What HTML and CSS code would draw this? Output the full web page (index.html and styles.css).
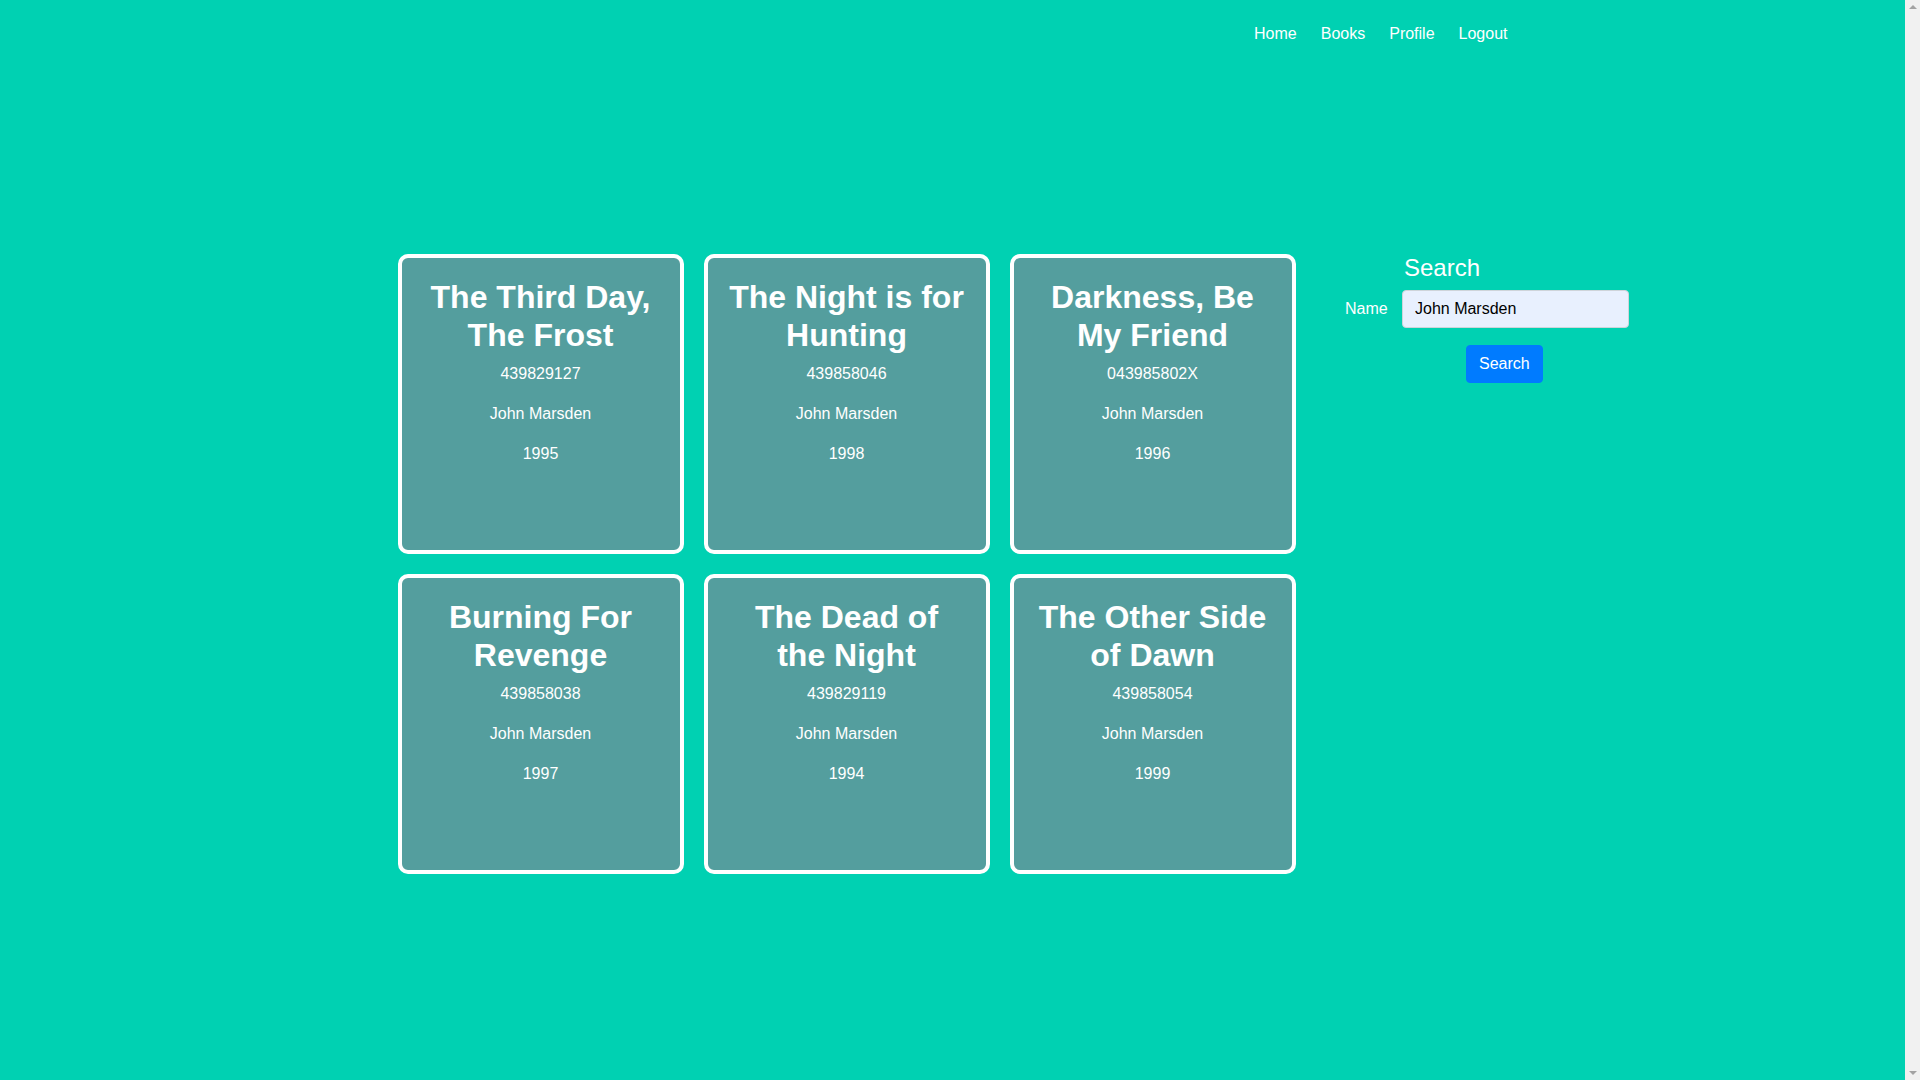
FILE: index.html
```html
<!DOCTYPE html>
<html lang="en">
<head>
<meta charset="utf-8">
<title>Books</title>
<link rel="stylesheet" href="styles.css">
</head>
<body>
<div class="page">
  <header class="container header">
    <nav class="nav">
      <a class="nav-link" href="#">Home</a>
      <a class="nav-link" href="#">Books</a>
      <a class="nav-link" href="#">Profile</a>
      <a class="nav-link" href="#">Logout</a>
    </nav>
  </header>
  <main class="container main">
    <section class="cards">
      <article class="card">
        <h2 class="card-title">The Third Day, The Frost</h2>
        <p>439829127</p>
        <p>John Marsden</p>
        <p>1995</p>
      </article>
      <article class="card">
        <h2 class="card-title">The Night is for Hunting</h2>
        <p>439858046</p>
        <p>John Marsden</p>
        <p>1998</p>
      </article>
      <article class="card">
        <h2 class="card-title">Darkness, Be My Friend</h2>
        <p>043985802X</p>
        <p>John Marsden</p>
        <p>1996</p>
      </article>
      <article class="card">
        <h2 class="card-title">Burning For Revenge</h2>
        <p>439858038</p>
        <p>John Marsden</p>
        <p>1997</p>
      </article>
      <article class="card">
        <h2 class="card-title">The Dead of the Night</h2>
        <p>439829119</p>
        <p>John Marsden</p>
        <p>1994</p>
      </article>
      <article class="card">
        <h2 class="card-title">The Other Side of Dawn</h2>
        <p>439858054</p>
        <p>John Marsden</p>
        <p>1999</p>
      </article>
    </section>
    <aside class="search">
      <h4 class="search-title">Search</h4>
      <label class="search-label" for="name">Name</label>
      <input class="search-input" id="name" type="text" value="John Marsden">
      <button class="search-btn" type="button">Search</button>
    </aside>
  </main>
</div>
<div class="scrollbar" aria-hidden="true">
  <span class="arrow arrow-up"></span>
  <span class="arrow arrow-down"></span>
</div>
</body>
</html>
```
FILE: styles.css
```css
body {
  margin: 0;
  display: flex;
  min-height: 100vh;
  background: #00d1b2;
  color: #fff;
  font-family: "Liberation Sans", Arial, sans-serif;
  font-size: 16px;
  line-height: 1.5;
}
.page {
  flex: 1;
  min-width: 0;
}
.scrollbar {
  flex: 0 0 15px;
  height: 100vh;
  position: sticky;
  top: 0;
  background: #f1f1f1;
  display: flex;
  flex-direction: column;
  justify-content: space-between;
  align-items: center;
  padding: 5px 0;
  box-sizing: border-box;
}
.arrow {
  width: 0;
  height: 0;
  border-left: 4px solid transparent;
  border-right: 4px solid transparent;
}
.arrow-up {
  border-bottom: 4px solid #a3a3a3;
}
.arrow-down {
  border-top: 4px solid #a3a3a3;
}
.container {
  width: 1110px;
  margin: 0 auto;
}
.header {
  padding-top: 22px;
}
.nav {
  display: flex;
  justify-content: flex-end;
  gap: 24px;
}
.nav-link {
  color: #fff;
  text-decoration: none;
}
.main {
  margin-top: 208px;
  display: flex;
  align-items: flex-start;
  gap: 49.5px;
  padding-bottom: 40px;
}
.cards {
  flex-shrink: 0;
  display: grid;
  grid-template-columns: repeat(3, 286px);
  gap: 20px;
}
.card {
  box-sizing: border-box;
  width: 286px;
  height: 300px;
  border: 4px solid #fff;
  border-radius: 10px;
  background: #549e9e;
  padding: 20px;
  text-align: center;
}
.card-title {
  margin: 0 0 7px;
  font-size: 32px;
  font-weight: 700;
  line-height: 1.2;
}
.card p {
  margin: 0 0 16px;
}
.search {
  flex-shrink: 0;
  display: grid;
  grid-template-columns: 57px 227px;
  align-items: center;
}
.search-title {
  grid-column: 2;
  margin: 0 0 7px 2px;
  font-size: 24px;
  font-weight: 400;
  line-height: 1.2;
}
.search-label {
  grid-column: 1;
}
.search-input {
  grid-column: 2;
  box-sizing: border-box;
  width: 227px;
  height: 38px;
  padding: 6px 12px;
  border: 1px solid #ced4da;
  border-radius: 4px;
  background: #e8f0fe;
  color: #000;
  font-family: inherit;
  font-size: 16px;
}
.search-btn {
  grid-column: 2;
  justify-self: start;
  margin: 17px 0 0 64px;
  padding: 6px 12px;
  border: 1px solid #007bff;
  border-radius: 4px;
  background: #007bff;
  color: #fff;
  font-family: inherit;
  font-size: 16px;
  line-height: 24px;
}
```
